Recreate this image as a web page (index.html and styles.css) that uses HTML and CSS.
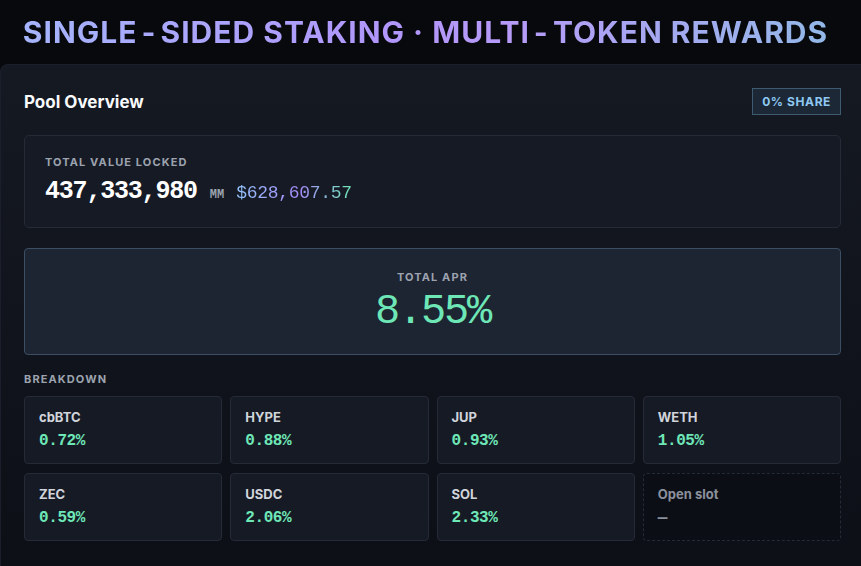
FILE: index.html
```html
<!DOCTYPE html>
<html lang="en">
<head>
    <meta charset="UTF-8">
    <meta name="viewport" content="width=device-width, initial-scale=1.0">
    <title>Staking Pool</title>
    <link rel="stylesheet" href="styles.css">
</head>
<body>
    <header class="top-bar">
        <h1 class="headline">SINGLE<span class="dash">-</span>SIDED STAKING · MULTI<span class="dash">-</span>TOKEN REWARDS</h1>
    </header>

    <main class="panel">
        <!-- Title row -->
        <div class="panel-head">
            <h2>Pool Overview</h2>
            <span class="share-badge">0% SHARE</span>
        </div>

        <!-- Total value locked -->
        <section class="tvl-box">
            <div class="label">TOTAL VALUE LOCKED</div>
            <div class="tvl-row">
                <span class="tvl-amount">437,333,980</span>
                <span class="tvl-unit">MM</span>
                <span class="tvl-usd">$628,607.57</span>
            </div>
        </section>

        <!-- Total APR -->
        <section class="apr-box">
            <div class="label">TOTAL APR</div>
            <div class="apr-value">8.55%</div>
        </section>

        <!-- Per token breakdown -->
        <div class="label breakdown-label">BREAKDOWN</div>
        <div class="token-grid">
            <div class="token">
                <div class="token-name">cbBTC</div>
                <div class="token-apr">0.72%</div>
            </div>
            <div class="token">
                <div class="token-name">HYPE</div>
                <div class="token-apr">0.88%</div>
            </div>
            <div class="token">
                <div class="token-name">JUP</div>
                <div class="token-apr">0.93%</div>
            </div>
            <div class="token">
                <div class="token-name">WETH</div>
                <div class="token-apr">1.05%</div>
            </div>
            <div class="token">
                <div class="token-name">ZEC</div>
                <div class="token-apr">0.59%</div>
            </div>
            <div class="token">
                <div class="token-name">USDC</div>
                <div class="token-apr">2.06%</div>
            </div>
            <div class="token">
                <div class="token-name">SOL</div>
                <div class="token-apr">2.33%</div>
            </div>
            <div class="token empty">
                <div class="token-name">Open slot</div>
                <div class="token-apr">—</div>
            </div>
        </div>
    </main>
</body>
</html>
```

FILE: styles.css
```css
/* Staking pool dashboard */
:root {
    --bg: #07090d;
    --panel-top: #151922;
    --panel-bottom: #0c0f16;
    --line: #252a37;
    --muted: #9ca3af;
    --green: #6ee7b7;
    --mono: 'Liberation Mono', 'DejaVu Sans Mono', monospace;
}

* {
    box-sizing: border-box;
    margin: 0;
    padding: 0;
}

body {
    font-family: Inter, 'Noto Sans', sans-serif;
    background-color: var(--bg);
    color: #f3f4f6;
    overflow: hidden;
}

/* Top heading */
.top-bar {
    height: 64px;
    padding-right: 10px;
    display: flex;
    align-items: center;
    justify-content: center;
}

.headline {
    font-size: 30px;
    font-weight: 700;
    letter-spacing: 1px;
    line-height: 1;
    background: linear-gradient(90deg, #a5b4fc 0%, #b196fb 45%, #b69af8 60%, #93b8e8 100%);
    -webkit-background-clip: text;
    background-clip: text;
    color: transparent;
}

.headline .dash {
    margin: 0 4px;
}

/* Main card */
.panel {
    min-height: 510px;
    padding: 23px 20px 24px 23px;
    background: linear-gradient(180deg, var(--panel-top), var(--panel-bottom));
    border-top: 1px solid #1a1f2b;
    border-left: 1px solid #1a1f2b;
    border-radius: 8px 0 0 0;
}

.panel-head {
    display: flex;
    justify-content: space-between;
    align-items: center;
    margin-bottom: 20px;
}

.panel-head h2 {
    font-size: 17px;
    font-weight: 700;
    color: #f9fafb;
}

.share-badge {
    padding: 5px 9px;
    font-size: 12px;
    font-weight: 700;
    letter-spacing: 0.6px;
    color: #8ec8f2;
    background-color: #1c2835;
    border: 1px solid #3d5a70;
}

.label {
    font-size: 11px;
    font-weight: 700;
    letter-spacing: 1.1px;
    color: var(--muted);
}

/* TVL */
.tvl-box {
    padding: 19px 20px 21px;
    background-color: #161a25;
    border: 1px solid var(--line);
    border-radius: 5px;
    margin-bottom: 20px;
}

.tvl-row {
    display: flex;
    align-items: baseline;
    gap: 13px;
    margin-top: 8px;
    font-family: var(--mono);
}

.tvl-amount {
    font-size: 25px;
    font-weight: 700;
    letter-spacing: -1.2px;
    color: #ffffff;
}

.tvl-unit {
    font-size: 12px;
    font-weight: 700;
    color: var(--muted);
    margin-right: -1px;
}

.tvl-usd {
    font-size: 18px;
    letter-spacing: -0.3px;
    background: linear-gradient(90deg, #93c5fd 0%, #a78bfa 55%, #6ee7b7 100%);
    -webkit-background-clip: text;
    background-clip: text;
    color: transparent;
}

/* APR */
.apr-box {
    padding: 21px 20px 18px;
    text-align: center;
    background-color: #1d2432;
    border: 1px solid #3b4e63;
    border-radius: 4px;
    margin-bottom: 17px;
}

.apr-value {
    margin-top: 4px;
    font-family: var(--mono);
    font-size: 42px;
    font-weight: 500;
    letter-spacing: -2.2px;
    line-height: 1.15;
    color: var(--green);
}

/* Breakdown grid */
.breakdown-label {
    margin-bottom: 10px;
}

.token-grid {
    display: grid;
    grid-template-columns: repeat(4, 1fr);
    gap: 9px 8px;
}

.token {
    height: 68px;
    padding: 12px 14px 0;
    background-color: #161a25;
    border: 1px solid var(--line);
    border-radius: 4px;
}

.token.empty {
    background-color: #0b0e15;
    border-style: dashed;
}

.token-name {
    font-size: 13px;
    font-weight: 700;
    color: #d1d5db;
}

.token.empty .token-name {
    color: #8b919c;
}

.token-apr {
    margin-top: 7px;
    font-family: var(--mono);
    font-size: 16px;
    font-weight: 700;
    letter-spacing: -0.4px;
    color: var(--green);
}

.token.empty .token-apr {
    color: #8b919c;
}
```
